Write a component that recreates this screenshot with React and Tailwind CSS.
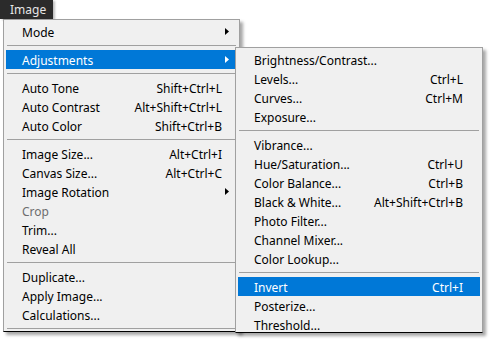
import React from "react";

const Arrow = ({ white }) => (
  <svg width="4" height="7" viewBox="0 0 4 7" className="shrink-0">
    <path d="M0 0 L4 3.5 L0 7 Z" fill={white ? "#ffffff" : "#000000"} />
  </svg>
);

const Sep = () => (
  <div className="h-[9px] flex items-center px-[3px]">
    <div className="h-px w-full bg-[#a0a0a0]" />
  </div>
);

const Row = ({ label, shortcut, arrow, active, disabled, pr = "pr-[15px]" }) => (
  <div
    className={`mx-[2px] h-[19px] flex items-center pt-[2px] pl-[16px] ${pr} ${
      active ? "bg-[#0078d7] text-white" : disabled ? "text-[#6d6d6d]" : "text-black"
    }`}
  >
    <span className="flex-1 whitespace-nowrap">{label}</span>
    {shortcut && <span className="whitespace-nowrap">{shortcut}</span>}
    {arrow && (
      <span className="mr-[-7px] mt-[-2px]">
        <Arrow white={active} />
      </span>
    )}
  </div>
);

export default function App() {
  return (
    <div
      className="relative w-[492px] h-[339px] bg-white overflow-hidden text-[12px] leading-none"
      style={{ fontFamily: '"Noto Sans", "Open Sans", sans-serif' }}
    >
      {/* Tab */}
      <div className="absolute left-0 top-0 w-[53px] h-[19px] bg-[#2b2b2b] text-[#e6e6e6] flex items-center pt-[1px] pl-[10px] shadow-[2px_1px_2px_rgba(0,0,0,0.25)]">
        Image
      </div>

      {/* Main menu */}
      <div className="absolute left-[3px] top-[19px] w-[237px] h-[313px] bg-[#f0f0f0] border border-[#a0a0a0] border-b-[#000000] shadow-[3px_3px_3px_rgba(0,0,0,0.35)] pt-[2px] overflow-hidden">
        <Row label="Mode" arrow />
        <Sep />
        <Row label="Adjustments" arrow active />
        <Sep />
        <Row label="Auto Tone" shortcut="Shift+Ctrl+L" />
        <Row label="Auto Contrast" shortcut="Alt+Shift+Ctrl+L" />
        <Row label="Auto Color" shortcut="Shift+Ctrl+B" />
        <Sep />
        <Row label="Image Size..." shortcut="Alt+Ctrl+I" />
        <Row label="Canvas Size..." shortcut="Alt+Ctrl+C" />
        <Row label="Image Rotation" arrow />
        <Row label="Crop" disabled />
        <Row label="Trim..." />
        <Row label="Reveal All" />
        <Sep />
        <Row label="Duplicate..." />
        <Row label="Apply Image..." />
        <Row label="Calculations..." />
        <Sep />
      </div>

      {/* Submenu */}
      <div className="absolute left-[235px] top-[47px] w-[248px] h-[286px] bg-[#f0f0f0] border border-[#a0a0a0] border-b-[#000000] shadow-[3px_3px_3px_rgba(0,0,0,0.35)] pt-[2px] overflow-hidden">
        <Row pr="pr-[17px]" label="Brightness/Contrast..." />
        <Row pr="pr-[17px]" label="Levels..." shortcut="Ctrl+L" />
        <Row pr="pr-[17px]" label="Curves..." shortcut="Ctrl+M" />
        <Row pr="pr-[17px]" label="Exposure..." />
        <Sep />
        <Row pr="pr-[17px]" label="Vibrance..." />
        <Row pr="pr-[17px]" label="Hue/Saturation..." shortcut="Ctrl+U" />
        <Row pr="pr-[17px]" label="Color Balance..." shortcut="Ctrl+B" />
        <Row pr="pr-[17px]" label="Black & White..." shortcut="Alt+Shift+Ctrl+B" />
        <Row pr="pr-[17px]" label="Photo Filter..." />
        <Row pr="pr-[17px]" label="Channel Mixer..." />
        <Row pr="pr-[17px]" label="Color Lookup..." />
        <Sep />
        <Row pr="pr-[17px]" label="Invert" shortcut="Ctrl+I" active />
        <Row pr="pr-[17px]" label="Posterize..." />
        <Row pr="pr-[17px]" label="Threshold..." />
      </div>
    </div>
  );
}
